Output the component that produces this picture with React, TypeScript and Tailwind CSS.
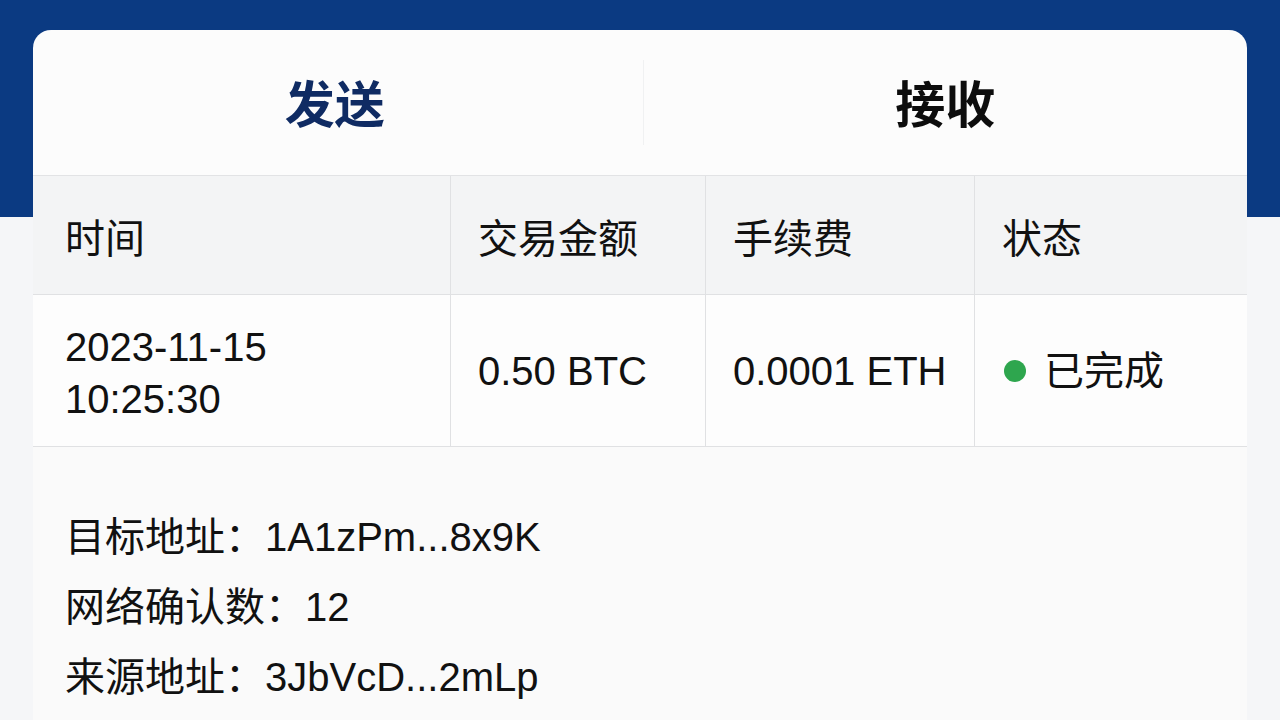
import React from 'react';

type Tx = {
  time: string[];
  amount: string;
  fee: string;
  status: string;
};

const tx: Tx = {
  time: ['2023-11-15', '10:25:30'],
  amount: '0.50 BTC',
  fee: '0.0001 ETH',
  status: '已完成',
};

const details = [
  { label: '目标地址', value: '1A1zPm...8x9K' },
  { label: '网络确认数', value: '12' },
  { label: '来源地址', value: '3JbVcD...2mLp' },
];

const columns = ['时间', '交易金额', '手续费', '状态'];

function Tabs() {
  const [active, setActive] = React.useState<'send' | 'receive'>('send');

  return (
    <div className="flex h-[146px] border-b border-[#e2e3e5]">
      <button
        type="button"
        onClick={() => setActive('send')}
        className={`flex-1 flex items-center justify-center pt-2 text-[50px] font-bold ${
          active === 'send' ? 'text-[#0f2b63]' : 'text-[#0d0d0d]'
        }`}
      >
        发送
      </button>
      <div className="w-px my-[30px] ml-[6px] bg-[#f0f1f2]" />
      <button
        type="button"
        onClick={() => setActive('receive')}
        className={`flex-1 flex items-center justify-center pt-2 text-[50px] font-bold ${
          active === 'receive' ? 'text-[#0f2b63]' : 'text-[#0d0d0d]'
        }`}
      >
        接收
      </button>
    </div>
  );
}

function TxTable() {
  return (
    <div className="grid grid-cols-[417px_255px_269px_1fr] text-[40px] text-[#111111]">
      {columns.map((col, i) => (
        <div
          key={col}
          className={`h-[119px] flex items-center pt-2 bg-[#f3f4f5] border-b border-[#e0e1e3] ${
            i === 0 ? 'pl-8' : 'pl-[27px] border-l'
          }`}
        >
          {col}
        </div>
      ))}

      <div className="h-[152px] flex flex-col justify-center pt-1 pl-8 leading-[52px] bg-[#fdfdfd] border-b border-[#e0e1e3]">
        {tx.time.map((line) => (
          <span key={line}>{line}</span>
        ))}
      </div>
      <div className="h-[152px] flex items-center pl-[27px] bg-[#fdfdfd] border-l border-b border-[#e0e1e3]">
        {tx.amount}
      </div>
      <div className="h-[152px] flex items-center pl-[27px] bg-[#fdfdfd] border-l border-b border-[#e0e1e3]">
        {tx.fee}
      </div>
      <div className="h-[152px] flex items-center gap-[18px] pl-[29px] bg-[#fdfdfd] border-l border-b border-[#e0e1e3]">
        <span className="w-[22px] h-[22px] rounded-full bg-[#2ea64e]" />
        {tx.status}
      </div>
    </div>
  );
}

export default function App() {
  return (
    <div
      className="h-[720px] overflow-hidden bg-[linear-gradient(#0b3a82_0,#0b3a82_217px,#f5f6f8_217px)] pt-[30px] px-[33px]"
      style={{ fontFamily: '"Liberation Sans", "Noto Sans CJK SC", sans-serif' }}
    >
      <div className="rounded-t-[18px] bg-[#fcfcfc] overflow-hidden">
        <Tabs />
        <TxTable />
        <div className="bg-[#fafafa] pt-[55px] pb-10 pl-8 text-[40px] leading-[70px] text-[#111111]">
          {details.map((d) => (
            <div key={d.label}>
              {d.label}：{d.value}
            </div>
          ))}
        </div>
      </div>
    </div>
  );
}
